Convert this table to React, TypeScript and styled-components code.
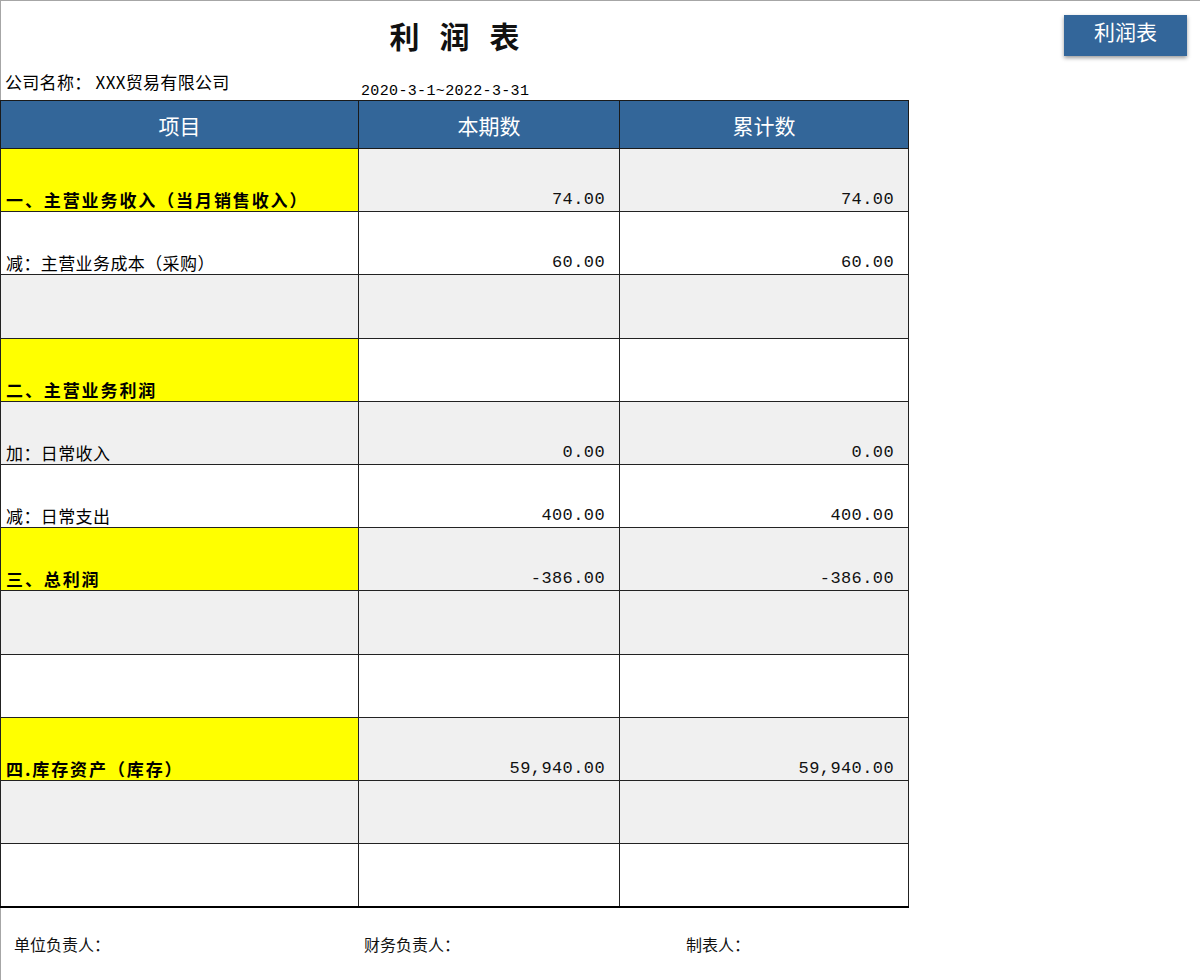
import React from "react";
import styled, { createGlobalStyle } from "styled-components";

const GlobalStyle = createGlobalStyle`
  html, body { margin: 0; padding: 0; background: #fff; }
  body { font-family: "Noto Sans CJK SC", "Noto Sans", sans-serif; color: #000; }
  * { box-sizing: border-box; }
`;

const Page = styled.div`
  width: 1200px;
  height: 980px;
  border-top: 1px solid #a6a6a6;
  border-left: 1px solid #a6a6a6;
  background: #fff;
  display: grid;
  grid-template-columns: 907px 1fr;
  grid-template-rows: 99px auto 1fr;
`;

const Heading = styled.div`
  display: flex;
  flex-direction: column;
`;

const Title = styled.h1`
  margin: 0;
  padding: 14px 0 0 20px;
  font-family: "Noto Sans CJK SC", sans-serif;
  font-size: 30px;
  line-height: 40px;
  font-weight: 700;
  letter-spacing: 20px;
  text-align: center;
  color: #111;
`;

const MetaRow = styled.div`
  flex: 1;
  display: grid;
  grid-template-columns: 357px 1fr;
  align-items: end;
`;

const Company = styled.span`
  padding: 0 0 8px 4px;
  font-size: 17px;
  line-height: 20px;
  letter-spacing: 0.3px;
`;

const DateRange = styled.span`
  padding-left: 3px;
  font-family: "Liberation Mono", monospace;
  font-size: 15px;
  line-height: 16px;
  letter-spacing: 0.35px;
`;

const ButtonArea = styled.div`
  display: flex;
  justify-content: flex-end;
  align-items: flex-start;
  padding: 14px 13px 0 0;
`;

const SheetButton = styled.button`
  width: 123px;
  height: 41px;
  border: none;
  background: #33669a;
  color: #fff;
  font-family: "Noto Sans CJK SC", sans-serif;
  font-size: 21px;
  line-height: 28px;
  padding: 2px 0 0;
  display: flex;
  justify-content: center;
  align-items: flex-start;
  box-shadow: 0 2px 4px rgba(0, 0, 0, 0.4);
`;

const Table = styled.table`
  width: 908px;
  margin-left: -1px;
  table-layout: fixed;
  border-collapse: collapse;
  border-bottom: 2px solid #000;
`;

const HeadCell = styled.th`
  height: 48px;
  background: #336699;
  color: #fff;
  font-weight: 400;
  font-size: 21px;
  line-height: 24px;
  border: 1px solid #1a1a1a;
  text-align: center;
  padding: 0;
`;

const BodyRow = styled.tr<{ $shade: boolean }>`
  height: 63.2px;
  background: ${(p) => (p.$shade ? "#f0f0f0" : "#fff")};
`;

const LabelCell = styled.td<{ $strong: boolean }>`
  vertical-align: bottom;
  border: 1px solid #222;
  padding: 0 4px 0 5px;
  background: ${(p) => (p.$strong ? "#ffff00" : "transparent")};
  font-size: 17px;
  line-height: 22px;
  font-weight: ${(p) => (p.$strong ? 700 : 400)};
  letter-spacing: ${(p) => (p.$strong ? "1.9px" : "0.4px")};
  white-space: nowrap;
  overflow: hidden;
`;

const NumCell = styled.td`
  vertical-align: bottom;
  border: 1px solid #222;
  padding: 0 14px 1px 0;
  text-align: right;
  font-family: "Liberation Mono", monospace;
  font-size: 17px;
  line-height: 20px;
  letter-spacing: 0.4px;
  color: #111;
`;

const Footer = styled.div`
  grid-column: 1 / -1;
  display: grid;
  grid-template-columns: 350px 322px 1fr;
  align-items: center;
  padding-left: 13px;
  font-size: 16px;
  color: #111;
`;

type Row = { label: string; strong?: boolean; cur?: string; acc?: string; shade: boolean };

const rows: Row[] = [
  { label: "一、主营业务收入（当月销售收入）", strong: true, cur: "74.00", acc: "74.00", shade: true },
  { label: "减：主营业务成本（采购）", cur: "60.00", acc: "60.00", shade: false },
  { label: "", shade: true },
  { label: "二、主营业务利润", strong: true, shade: false },
  { label: "加：日常收入", cur: "0.00", acc: "0.00", shade: true },
  { label: "减：日常支出", cur: "400.00", acc: "400.00", shade: false },
  { label: "三、总利润", strong: true, cur: "-386.00", acc: "-386.00", shade: true },
  { label: "", shade: true },
  { label: "", shade: false },
  { label: "四.库存资产（库存）", strong: true, cur: "59,940.00", acc: "59,940.00", shade: true },
  { label: "", shade: true },
  { label: "", shade: false },
];

export default function App() {
  return (
    <>
      <GlobalStyle />
      <Page>
        <Heading>
          <Title>利润表</Title>
          <MetaRow>
            <Company>公司名称： XXX贸易有限公司</Company>
            <DateRange>2020-3-1~2022-3-31</DateRange>
          </MetaRow>
        </Heading>
        <ButtonArea>
          <SheetButton>利润表</SheetButton>
        </ButtonArea>
        <Table>
          <colgroup>
            <col style={{ width: 358 }} />
            <col style={{ width: 261 }} />
            <col style={{ width: 289 }} />
          </colgroup>
          <thead>
            <tr>
              <HeadCell>项目</HeadCell>
              <HeadCell>本期数</HeadCell>
              <HeadCell>累计数</HeadCell>
            </tr>
          </thead>
          <tbody>
            {rows.map((r, i) => (
              <BodyRow key={i} $shade={r.shade}>
                <LabelCell $strong={!!r.strong}>{r.label}</LabelCell>
                <NumCell>{r.cur ?? ""}</NumCell>
                <NumCell>{r.acc ?? ""}</NumCell>
              </BodyRow>
            ))}
          </tbody>
        </Table>
        <div />
        <Footer>
          <span>单位负责人：</span>
          <span>财务负责人：</span>
          <span>制表人：</span>
        </Footer>
      </Page>
    </>
  );
}
